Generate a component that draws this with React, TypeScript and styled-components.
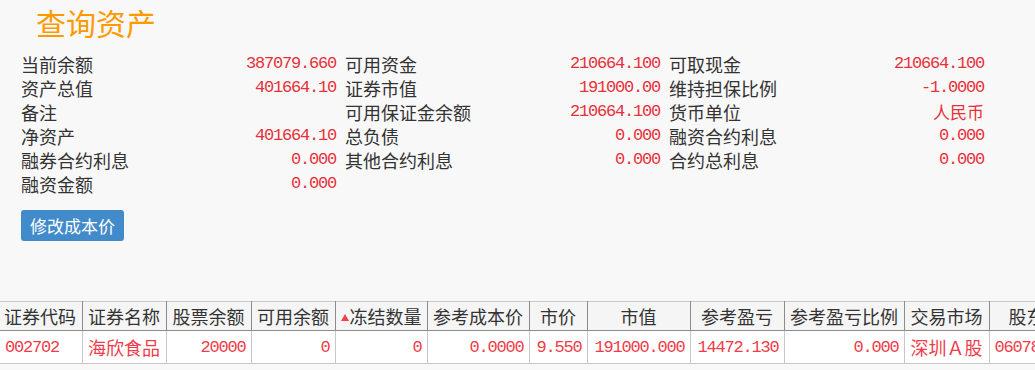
import React from 'react';
import styled, { createGlobalStyle } from 'styled-components';

const GlobalStyle = createGlobalStyle`
    html, body {
        margin: 0;
        padding: 0;
        background: #f8f8f8;
        overflow: hidden;
    }
    body {
        font-family: "Noto Sans CJK SC", sans-serif;
        color: #333;
    }
`

interface ValueI {
    $cjk?: boolean;
}

interface CellI {
    $align?: 'left' | 'center' | 'right';
    $num?: boolean;
}

const Page = styled.div`
    width: 1035px;
    height: 370px;
    overflow: hidden;
`

const Title = styled.h1`
    margin: 0;
    padding-left: 36px;
    height: 45px;
    line-height: 45px;
    font-size: 30px;
    font-weight: normal;
    color: #ff9900;
`

const InfoGrid = styled.div`
    display: grid;
    grid-template-columns: repeat(3, 324px);
    margin: 7px 0 0 21px;
`

const InfoCell = styled.div`
    display: flex;
    align-items: center;
    justify-content: space-between;
    height: 24px;
    padding-right: 9px;
`

const Label = styled.span`
    font-size: 18px;
    line-height: 24px;
    color: #333;
`

const Value = styled.span<ValueI>`
    font-family: ${(p: ValueI) => p.$cjk ? '"Noto Sans CJK SC", sans-serif' : '"Liberation Mono", monospace'};
    font-size: ${(p: ValueI) => p.$cjk ? '17px' : '17px'};
    letter-spacing: ${(p: ValueI) => p.$cjk ? '0' : '-1.2px'};
    line-height: 24px;
    color: #e8303a;
`

const Toolbar = styled.div`
    padding: 14px 0 0 21px;
    height: 31px;
`

const EditButton = styled.button`
    height: 31px;
    padding: 0 9px;
    border: none;
    border-radius: 3px;
    background: #428bca;
    color: #fff;
    font-family: "Noto Sans CJK SC", sans-serif;
    font-size: 17px;
    line-height: 31px;
    cursor: pointer;
`

const TableWrap = styled.div`
    margin-top: 60px;
    width: 1035px;
    overflow: hidden;
`

const Table = styled.table`
    border-collapse: collapse;
    table-layout: fixed;
    width: 1100px;
    background: #fff;
`

const HeadCell = styled.th`
    height: 28px;
    padding: 0 4px;
    background: #f5f5f5;
    border-top: 1px solid #c8c8c8;
    border-bottom: 1px solid #8c8c8c;
    border-right: 1px solid #8c8c8c;
    font-size: 18px;
    font-weight: normal;
    line-height: 28px;
    color: #333;
    text-align: center;
    white-space: nowrap;
    overflow: hidden;

    &:first-child {
        text-align: left;
    }
`

const SortMark = styled.span`
    display: inline-block;
    width: 0;
    height: 0;
    margin-right: 1px;
    border-left: 4px solid transparent;
    border-right: 4px solid transparent;
    border-bottom: 7px solid #f0404a;
    vertical-align: 3px;
`

const DataCell = styled.td<CellI>`
    height: 32px;
    padding: 0 5px;
    border-bottom: 1px solid #c8c8c8;
    border-right: 1px solid #c8c8c8;
    text-align: ${(p: CellI) => p.$align || 'right'};
    font-family: ${(p: CellI) => p.$num ? '"Liberation Mono", monospace' : '"Noto Sans CJK SC", sans-serif'};
    font-size: ${(p: CellI) => p.$num ? '17px' : '18px'};
    letter-spacing: ${(p: CellI) => p.$num ? '-1.2px' : '0'};
    color: #f03c4a;
    white-space: nowrap;
    overflow: hidden;
`

const info: [string, string][] = [
    ['当前余额', '387079.660'], ['可用资金', '210664.100'], ['可取现金', '210664.100'],
    ['资产总值', '401664.10'], ['证券市值', '191000.00'], ['维持担保比例', '-1.0000'],
    ['备注', ''], ['可用保证金余额', '210664.100'], ['货币单位', '人民币'],
    ['净资产', '401664.10'], ['总负债', '0.000'], ['融资合约利息', '0.000'],
    ['融券合约利息', '0.000'], ['其他合约利息', '0.000'], ['合约总利息', '0.000'],
    ['融资金额', '0.000'], ['', ''], ['', ''],
];

const columns = [
    { title: '证券代码', width: 82 },
    { title: '证券名称', width: 84 },
    { title: '股票余额', width: 85 },
    { title: '可用余额', width: 84 },
    { title: '冻结数量', width: 92, sorted: true },
    { title: '参考成本价', width: 102 },
    { title: '市价', width: 58 },
    { title: '市值', width: 103 },
    { title: '参考盈亏', width: 94 },
    { title: '参考盈亏比例', width: 120 },
    { title: '交易市场', width: 85 },
    { title: '股东代码', width: 111 },
];

const row: { v: string; align?: 'left' | 'center' | 'right'; num?: boolean }[] = [
    { v: '002702', align: 'left', num: true },
    { v: '海欣食品', align: 'center' },
    { v: '20000', num: true },
    { v: '0', num: true },
    { v: '0', num: true },
    { v: '0.0000', num: true },
    { v: '9.550', num: true },
    { v: '191000.000', num: true },
    { v: '14472.130', num: true },
    { v: '0.000', num: true },
    { v: '深圳Ａ股', align: 'center' },
    { v: '0607800001', align: 'left', num: true },
];

export default function App() {
    return (
        <Page>
            <GlobalStyle />
            <Title>查询资产</Title>

            <InfoGrid>
                {info.map(([label, value], i) => (
                    <InfoCell key={i}>
                        <Label>{label}</Label>
                        <Value $cjk={/[\u4e00-\u9fa5]/.test(value)}>{value}</Value>
                    </InfoCell>
                ))}
            </InfoGrid>

            <Toolbar>
                <EditButton>修改成本价</EditButton>
            </Toolbar>

            <TableWrap>
                <Table>
                    <colgroup>
                        {columns.map((c) => <col key={c.title} style={{ width: c.width }} />)}
                    </colgroup>
                    <thead>
                        <tr>
                            {columns.map((c) => (
                                <HeadCell key={c.title}>
                                    {c.sorted && <SortMark />}
                                    {c.title}
                                </HeadCell>
                            ))}
                        </tr>
                    </thead>
                    <tbody>
                        <tr>
                            {row.map((c, i) => (
                                <DataCell key={i} $align={c.align} $num={c.num}>{c.v}</DataCell>
                            ))}
                        </tr>
                    </tbody>
                </Table>
            </TableWrap>
        </Page>
    );
}
